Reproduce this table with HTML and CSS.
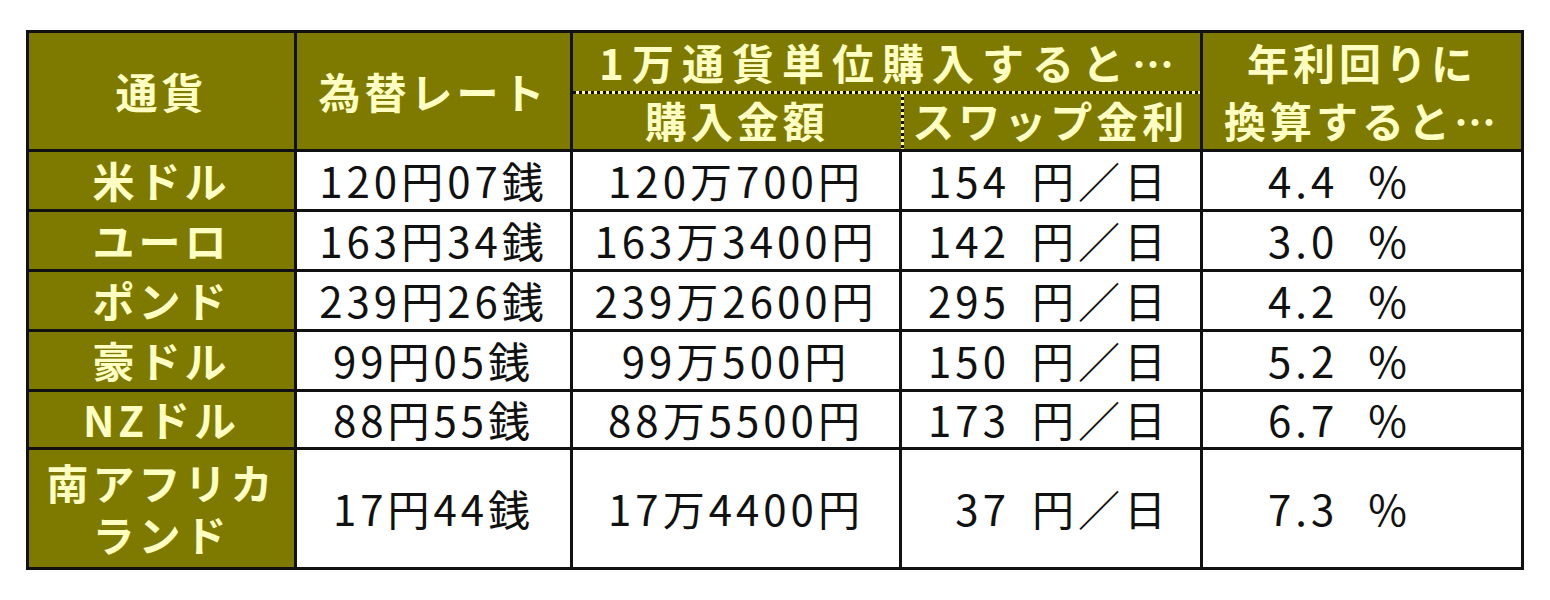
FILE: index.html
```html
<!DOCTYPE html>
<html lang="ja">
<head>
<meta charset="utf-8">
<title>通貨 スワップ金利</title>
<link rel="stylesheet" href="styles.css">
</head>
<body>
<div class="page">
<table class="fx">
  <colgroup>
    <col class="c1"><col class="c2"><col class="c3"><col class="c4"><col class="c5">
  </colgroup>
  <thead>
    <tr class="h1">
      <th rowspan="2">通貨</th>
      <th rowspan="2">為替レート</th>
      <th colspan="2" class="unit">1万通貨単位購入すると…</th>
      <th rowspan="2" class="yield">年利回りに<br>換算すると…</th>
    </tr>
    <tr class="h2">
      <th class="buy">購入金額</th>
      <th class="swap">スワップ金利</th>
    </tr>
  </thead>
  <tbody>
    <tr><th>米ドル</th><td>120円07銭</td><td>120万700円</td><td class="r">154<span class="gap"></span>円／日</td><td class="p">4.4<span class="gap2"></span>%</td></tr>
    <tr><th>ユーロ</th><td>163円34銭</td><td>163万3400円</td><td class="r">142<span class="gap"></span>円／日</td><td class="p">3.0<span class="gap2"></span>%</td></tr>
    <tr><th>ポンド</th><td>239円26銭</td><td>239万2600円</td><td class="r">295<span class="gap"></span>円／日</td><td class="p">4.2<span class="gap2"></span>%</td></tr>
    <tr><th>豪ドル</th><td>99円05銭</td><td>99万500円</td><td class="r">150<span class="gap"></span>円／日</td><td class="p">5.2<span class="gap2"></span>%</td></tr>
    <tr class="last-short"><th>NZドル</th><td>88円55銭</td><td>88万5500円</td><td class="r">173<span class="gap"></span>円／日</td><td class="p">6.7<span class="gap2"></span>%</td></tr>
    <tr class="tall"><th class="two"><span class="ln">南アフリカ</span><span class="ln">ランド</span></th><td>17円44銭</td><td>17万4400円</td><td class="r">37<span class="gap"></span>円／日</td><td class="p">7.3<span class="gap2"></span>%</td></tr>
  </tbody>
</table>
</div>
</body>
</html>
```

FILE: styles.css
```css
html, body {
  margin: 0;
  padding: 0;
  background: #ffffff;
}

.page {
  padding: 30px 0 0 26px;
}

.fx {
  border-collapse: collapse;
  table-layout: fixed;
  width: 1498px;
  font-family: "Noto Sans CJK JP", "Noto Sans", sans-serif;
  font-size: 42px;
  letter-spacing: 4px;
  line-height: 1;
  color: #111;
}

.c1 { width: 268px; }
.c2 { width: 276px; }
.c3 { width: 329px; }
.c4 { width: 301px; }
.c5 { width: 321px; }

.fx th,
.fx td {
  border: 3px solid #111;
  padding: 0;
  text-align: center;
  vertical-align: middle;
  white-space: nowrap;
}

.fx th {
  background: #7e7a00;
  color: #ffffc4;
  font-weight: 700;
}

.fx td {
  background: #ffffff;
  font-weight: 400;
}

.h1 th { height: 57px; }
.h2 th { height: 56px; }
.fx tbody tr { height: 60px; }
.fx tbody tr.last-short { height: 58px; }
.fx tbody tr.tall { height: 120px; }

.fx th.unit { letter-spacing: 8px; padding-left: 8px; }

.yield { line-height: 1.38; }

.two {
  line-height: 1;
}

.two .ln {
  display: block;
  height: 52px;
  line-height: 52px;
}

/* dotted separators inside the header */
.fx th.unit { border-bottom-style: hidden; }
.fx .h2 th { border-top-style: hidden; }
.fx th.buy { border-right-style: hidden; }
.fx th.swap { border-left-style: hidden; }

.fx .h2 th {
  background-image: repeating-linear-gradient(to right, #111 0 3px, #fff6a8 3px 6px);
  background-size: 100% 3px;
  background-repeat: no-repeat;
  background-position: top left;
}

.fx th.swap {
  background-image:
    repeating-linear-gradient(to right, #111 0 3px, #fff6a8 3px 6px),
    repeating-linear-gradient(to bottom, #111 0 3px, #fff6a8 3px 6px);
  background-size: 100% 3px, 3px 100%;
  background-repeat: no-repeat, no-repeat;
  background-position: top left, top left;
}

.fx td.r {
  text-align: right;
  padding-right: 30px;
}

.fx td.p {
  text-align: right;
  padding-right: 110px;
}

.gap { display: inline-block; width: 22px; }
.gap2 { display: inline-block; width: 30px; }
```
